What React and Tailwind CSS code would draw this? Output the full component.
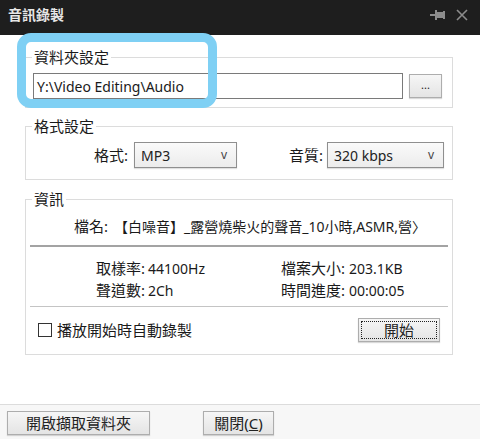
import React from 'react';

const font = { fontFamily: '"Noto Sans", "Noto Sans CJK TC", sans-serif' };

const PinIcon = () => (
  <svg width="16" height="14" viewBox="0 0 16 14" fill="#8c8c8c">
    <rect x="0" y="6" width="5" height="2" />
    <rect x="5" y="2" width="2" height="10" />
    <rect x="7" y="4" width="7" height="6" />
    <rect x="13" y="3" width="2" height="8" />
  </svg>
);

const CloseIcon = () => (
  <svg width="12" height="12" viewBox="0 0 12 12" stroke="#8c8c8c" strokeWidth="1.6" fill="none">
    <path d="M1 1 L11 11 M11 1 L1 11" />
  </svg>
);

const Button = ({ className = '', children }) => (
  <button className={`h-[24px] border border-[#adadad] bg-gradient-to-b from-[#f6f6f6] to-[#e4e4e4] text-[15px] leading-none text-[#222] shadow-[0_1px_1px_rgba(0,0,0,0.15)] ${className}`}>
    {children}
  </button>
);

const Select = ({ value, className = '' }) => (
  <div className={`h-[26px] flex items-center justify-between pl-[6px] pr-[9px] border border-[#8f8f8f] bg-gradient-to-b from-[#fafafa] to-[#ececec] shadow-[0_1px_1px_rgba(0,0,0,0.12)] ${className}`}>
    <span className="text-[14px] text-[#222]">{value}</span>
    <span className="text-[12px] text-[#444]">v</span>
  </div>
);

const Group = ({ title, className = '', children }) => (
  <fieldset className={`border border-[#dcdcdc] ${className}`}>
    <legend className="ml-[6px] px-[2px] text-[15px] leading-[16px] text-[#1a1a1a]">{title}</legend>
    {children}
  </fieldset>
);

export default function App() {
  return (
    <div className="relative w-[480px] h-[439px] bg-white flex flex-col overflow-hidden" style={font}>
      {/* Title bar */}
      <div className="h-[35px] bg-[#1e1e1e] flex items-start justify-between pl-[8px] pr-[12px] pt-[5px]">
        <span className="text-[14px] font-bold text-[#e6e6e6] leading-[20px]">音訊錄製</span>
        <div className="flex items-center gap-[10px] h-[20px]">
          <PinIcon />
          <CloseIcon />
        </div>
      </div>

      <div className="flex-1 pl-[25px] pr-[27px] pt-[14px]">
        {/* Folder settings */}
        <Group title="資料夾設定" className="pb-[8px]">
          <div className="flex items-center pt-[8px] pl-[7px] pr-[10px]">
            <div className="w-[370px] h-[26px] border border-[#7a7a7a] flex items-center pl-[3px]">
              <span className="text-[14px] text-[#1a1a1a]">Y:\Video Editing\Audio</span>
            </div>
            <Button className="ml-[6px] w-[33px] !text-[11px] pb-[4px]">...</Button>
          </div>
        </Group>

        {/* Format settings */}
        <Group title="格式設定" className="mt-[10px] pb-[11px]">
          <div className="flex items-center pt-[8px] pr-[8px]">
            <span className="w-[102px] text-right text-[15px] text-[#1a1a1a]">格式:</span>
            <Select value="MP3" className="ml-[6px] w-[103px]" />
            <span className="flex-1 text-right text-[15px] text-[#1a1a1a]">音質:</span>
            <Select value="320 kbps" className="ml-[4px] w-[117px]" />
          </div>
        </Group>

        {/* Info */}
        <Group title="資訊" className="mt-[11px] pb-[12px]">
          <div className="flex items-center h-[20px] mt-[9px] pr-[10px] text-[14px] text-[#1a1a1a]">
            <span className="w-[82px] shrink-0 text-right text-[15px]">檔名:</span>
            <span className="ml-[6px] whitespace-nowrap overflow-hidden">【白噪音】_露營燒柴火的聲音_10小時,ASMR,營〉</span>
          </div>
          <div className="mt-[9px] mx-[4px] h-[2px] bg-[#a3a3a3]" />
          <div className="mt-[10px] flex text-[14px] text-[#1a1a1a]">
            <div className="w-[225px]">
              <div className="flex items-center h-[22px]">
                <span className="w-[119px] text-right text-[15px]">取樣率:</span>
                <span className="ml-[3px]">44100Hz</span>
              </div>
              <div className="flex items-center h-[22px]">
                <span className="w-[119px] text-right text-[15px]">聲道數:</span>
                <span className="ml-[3px]">2Ch</span>
              </div>
            </div>
            <div>
              <div className="flex items-center h-[22px]">
                <span className="w-[94px] text-right text-[15px]">檔案大小:</span>
                <span className="ml-[4px]">203.1KB</span>
              </div>
              <div className="flex items-center h-[22px]">
                <span className="w-[94px] text-right text-[15px]">時間進度:</span>
                <span className="ml-[4px]">00:00:05</span>
              </div>
            </div>
          </div>
          <div className="mt-[5px] mx-[4px] h-[1px] bg-[#c4c4c4]" />
          <div className="mt-[11px] flex items-center justify-between pl-[12px] pr-[12px]">
            <label className="flex items-center gap-[5px]">
              <span className="w-[14px] h-[14px] border border-[#333] bg-white" />
              <span className="text-[15px] text-[#1a1a1a]">播放開始時自動錄製</span>
            </label>
            <Button className="w-[82px] p-[2px]">
              <span className="flex items-center justify-center w-full h-full border border-dotted border-[#222]">開始</span>
            </Button>
          </div>
        </Group>
      </div>

      {/* Footer */}
      <div className="h-[35px] border-t border-[#dcdcdc] bg-[#f7f7f7] flex items-start pt-[6px] pl-[7px]">
        <Button className="w-[143px]">開啟擷取資料夾</Button>
        <Button className="ml-[53px] w-[71px]">
          關閉(<span className="underline">C</span>)
        </Button>
      </div>

      {/* Annotation highlight */}
      <div className="absolute left-[17px] top-[33px] w-[200px] h-[75px] border-[9px] border-[#7fd0f4] rounded-[14px]" />
    </div>
  );
}
